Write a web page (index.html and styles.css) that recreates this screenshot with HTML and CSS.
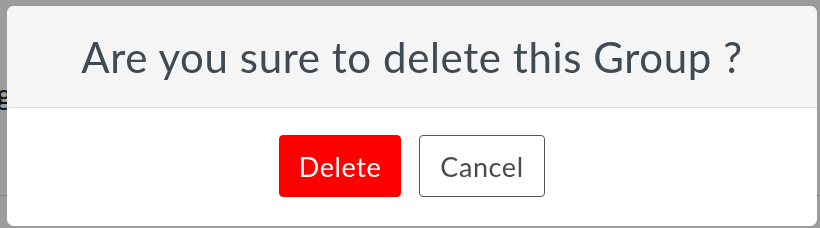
FILE: index.html
```html
<!DOCTYPE html>
<html lang="en">
<head>
<meta charset="utf-8">
<title>Delete group</title>
<link rel="stylesheet" href="styles.css">
</head>
<body>
<div class="page">
  <div class="page-row"><span class="page-label">g</span></div>
  <div class="page-rule"></div>
</div>
<div class="backdrop">
  <div class="modal">
    <div class="modal-header">
      <h2 class="modal-title">Are you sure to delete this Group ?</h2>
    </div>
    <div class="modal-body">
      <button class="btn btn-danger" type="button">Delete</button>
      <button class="btn btn-outline" type="button">Cancel</button>
    </div>
  </div>
</div>
</body>
</html>
```

FILE: styles.css
```css
* { box-sizing: border-box; }
html, body { margin: 0; padding: 0; }
body {
  width: 820px;
  height: 228px;
  overflow: hidden;
  background: #f4f4f4;
  font-family: "Lato", "Open Sans", sans-serif;
}
.page {
  padding-top: 74px;
}
.page-row {
  height: 40px;
  display: flex;
  align-items: center;
}
.page-label {
  font-size: 28px;
  color: #222;
  margin-left: -3px;
}
.page-rule {
  margin-top: 81px;
  border-top: 1px solid #cfcfcf;
}
.backdrop {
  position: fixed;
  inset: 0;
  background: rgba(0, 0, 0, 0.36);
  padding: 6px 3px 2px 7px;
}
.modal {
  height: 220px;
  background: #fff;
  border-radius: 7px;
  overflow: hidden;
  display: flex;
  flex-direction: column;
}
.modal-header {
  height: 102px;
  background: #f5f5f5;
  border-bottom: 1px solid #e0e0e0;
  display: flex;
  align-items: center;
  justify-content: center;
}
.modal-title {
  margin: 0;
  font-weight: 400;
  font-size: 42px;
  color: #3f4a52;
  letter-spacing: 0.6px;
}
.modal-body {
  flex: 1;
  display: flex;
  justify-content: center;
  align-items: flex-start;
  gap: 18px;
  padding-top: 27px;
}
.btn {
  height: 62px;
  font-family: inherit;
  font-size: 27px;
  letter-spacing: 0.6px;
  border-radius: 4px;
  cursor: pointer;
}
.btn-danger {
  width: 122px;
  background: #ff0000;
  border: 1px solid #ff0000;
  color: #fff;
}
.btn-outline {
  width: 126px;
  background: #fff;
  border: 1px solid #555;
  color: #4a4a4a;
}
```
